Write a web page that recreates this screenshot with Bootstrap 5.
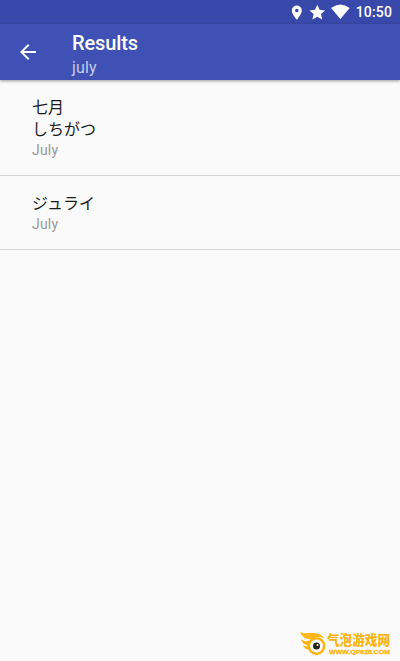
<!DOCTYPE html>
<html lang="en">
<head>
    <meta charset="UTF-8">
    <meta name="viewport" content="width=device-width, initial-scale=1.0">
    <title>Results</title>
  <link href="https://cdn.jsdelivr.net/npm/bootstrap@5.3.3/dist/css/bootstrap.min.css" rel="stylesheet">
  <script src="https://cdn.jsdelivr.net/npm/bootstrap@5.3.3/dist/js/bootstrap.bundle.min.js"></script>
  <style>
    body {
        background: #fafafa;
        font-family: Roboto, "Noto Sans CJK JP", sans-serif;
        height: 661px;
    }
    .status-bar {
        background: #3949ab;
        height: 24px;
        padding-right: 8px;
        font-size: 14px;
        font-weight: 500;
        letter-spacing: .15px;
    }
    .app-bar {
        background: #3f51b5;
        height: 56px;
        padding-left: 16px;
        box-shadow: 0 1px 3px rgba(0, 0, 0, .4);
    }
    .app-title {
        font-size: 20px;
        font-weight: 500;
        line-height: 24px;
        letter-spacing: -.1px;
        margin-top: 7px;
    }
    .app-subtitle {
        font-size: 16px;
        line-height: 19px;
        letter-spacing: .15px;
        margin-top: 3px;
        color: #c5cbe9;
    }
    .word-item {
        padding: 17px 32px 15px;
        border-bottom: 1px solid #d6d6d6;
        color: #1c1c1c;
        font-size: 16px;
        line-height: 22px;
    }
    .meaning {
        color: #999;
        font-size: 14px;
        line-height: 19px;
        letter-spacing: .2px;
    }
    .brand {
        color: #fdb515;
        padding: 0 8px 5px 0;
    }
    .brand-name {
        font-family: "Noto Sans CJK SC", sans-serif;
        font-size: 13.500px;
        font-weight: 900;
    }
  </style>
</head>
<body class="d-flex flex-column overflow-hidden">

    <!-- Status bar -->
    <div class="status-bar d-flex align-items-center justify-content-end text-white flex-shrink-0">
        <svg width="68" height="24" viewBox="0 0 68 24" fill="#fff">
            <path fill-rule="evenodd" d="M12.800 5.500a5 5 0 0 0-5 5c0 3.800 5 9.300 5 9.300s5-5.500 5-9.300a5 5 0 0 0-5-5zm0 3.200a1.800 1.800 0 1 1 0 3.600 1.800 1.800 0 0 1 0-3.600z"/>
            <path d="M33.300 4.700l2.300 5.100 5.500.6-4.100 3.700 1.200 5.400-4.900-2.800-4.900 2.800 1.200-5.400-4.100-3.700 5.500-.6z"/>
            <path d="M47.100 8.100Q56.400 1.100 65.700 8.100L56.400 19z"/>
        </svg>
        <span class="ms-1">10:50</span>
    </div>

    <!-- App bar -->
    <header class="app-bar d-flex text-white flex-shrink-0">
        <svg class="align-self-center" width="24" height="24" viewBox="0 0 24 24" fill="#fff">
            <path d="M20 11H7.830l5.590-5.590L12 4l-8 8 8 8 1.410-1.410L7.830 13H20v-2z"/>
        </svg>
        <div class="ms-3 ps-3">
            <div class="app-title">Results</div>
            <div class="app-subtitle">july</div>
        </div>
    </header>

    <!-- Word list -->
    <main class="flex-grow-1">
        <div class="word-item">
            <div lang="ja">七月</div>
            <div lang="ja">しちがつ</div>
            <div class="meaning">July</div>
        </div>
        <div class="word-item">
            <div lang="ja">ジュライ</div>
            <div class="meaning">July</div>
        </div>
    </main>

    <!-- Site mark -->
    <footer class="brand d-flex justify-content-end align-items-end">
        <svg width="28" height="25" viewBox="0 0 28 25">
            <path fill="#fdb515" d="M1 1C5 3.500 11 1 18 2.500c3.500.8 6 2.500 6.500 4.500-4-1.500-8-1.500-11 1C8 9 3 6.500 1 1z"/>
            <path fill="#fdb515" d="M2 8c3 3 6 2.500 11 1l-4 5C6 14 3 12 2 8zM4 14c2 1.500 3.500 1.500 5 .5l1 4c-3 0-5-1.500-6-4.500z"/>
            <circle cx="17.500" cy="15" r="7.700" fill="#fff" stroke="#fdb515" stroke-width="2.600"/>
            <circle cx="17.500" cy="15" r="3.500" fill="#272218"/>
            <circle cx="18.500" cy="14" r="1" fill="#fff"/>
        </svg>
        <svg class="overflow-visible" width="65" height="30" viewBox="0 -4 65 30" fill="#fdb515">
            <text class="brand-name" x="0" y="14.500" textLength="63" lengthAdjust="spacingAndGlyphs" lang="zh">气泡游戏网</text>
            <text x="2" y="23.500" textLength="61" lengthAdjust="spacingAndGlyphs" font-family="Liberation Sans, sans-serif" font-size="6" font-weight="700" stroke="#fdb515" stroke-width=".3">WWW.QP828.COM</text>
        </svg>
    </footer>

</body>
</html>
